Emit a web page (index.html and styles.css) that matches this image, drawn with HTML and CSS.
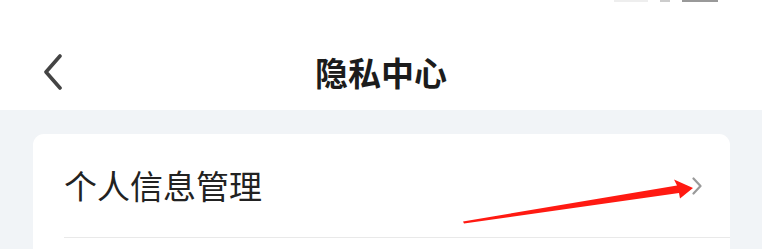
FILE: index.html
```html
<!DOCTYPE html>
<html>

<head>
    <title>隐私中心</title>
    <meta name="viewport" content="width=device-width,initial-scale=1">
    <link rel="stylesheet" href="styles.css">
</head>

<body>
    <div class="status">
        <span class="time">15:56</span>
        <span class="icons">
            <span class="signal"></span>
            <span class="wifi"></span>
            <span class="battery"></span>
        </span>
    </div>

    <header class="nav">
        <button class="back" aria-label="返回">
            <svg viewBox="0 0 20 36" width="20" height="36">
                <polyline points="17,2 3,18 17,34" fill="none" stroke="#444" stroke-width="3.6"
                    stroke-linecap="round" stroke-linejoin="round" />
            </svg>
        </button>
        <h1 class="title">隐私中心</h1>
        <span class="nav-spacer"></span>
    </header>

    <main class="content">
        <div class="card">
            <div class="row">
                <span class="row-label">个人信息管理</span>
                <svg class="chevron" viewBox="0 0 10 18" width="10" height="18">
                    <polyline points="1.5,1.5 8.5,9 1.5,16.5" fill="none" stroke="#9a9a9a" stroke-width="2.2"
                        stroke-linecap="round" stroke-linejoin="round" />
                </svg>
            </div>
            <div class="row row-empty"></div>
        </div>
    </main>

    <!-- red annotation arrow drawn on top of the screenshot -->
    <svg class="annotation" viewBox="0 0 762 249" width="762" height="249">
        <polygon points="463,221.5 677,185.5 674,179.5 693,188 680,198.5 679,193 464,223.5" fill="#ff1a12" />
    </svg>
</body>

</html>
```

FILE: styles.css
```css
body {
    margin: 0;
    font-family: "Noto Sans CJK SC", "Noto Sans", sans-serif;
    background-color: #f1f4f7;
    width: 762px;
    height: 249px;
    overflow: hidden;
    position: relative;
}

/* Only the bottom edge of the status bar is visible */
.status {
    height: 34px;
    background-color: #fff;
    display: flex;
    justify-content: space-between;
    padding: 0 44px 0 48px;
    overflow: hidden;
}

.status .time {
    font-size: 30px;
    font-weight: 600;
    color: #222;
    margin-top: -28px;
    line-height: 30px;
    height: 30px;
}

.status .icons {
    display: flex;
    gap: 12px;
    align-items: flex-start;
}

.signal,
.wifi {
    width: 34px;
    height: 2px;
    background-color: #eee;
}

.wifi {
    width: 10px;
    background-color: #ccc;
}

.battery {
    width: 36px;
    height: 2px;
    background-color: #999;
}

.nav {
    height: 76px;
    background-color: #fff;
    display: grid;
    grid-template-columns: 1fr auto 1fr;
    align-items: center;
}

.back {
    justify-self: start;
    margin-left: 43px;
    padding: 0;
    border: 0;
    background: none;
    display: flex;
}

.title {
    margin: 0;
    font-size: 33px;
    font-weight: 700;
    color: #1c1c1c;
    line-height: 1;
}

.content {
    padding: 24px 32px 0 33px;
}

.card {
    background-color: #fff;
    border-radius: 11px;
}

.row {
    height: 104px;
    margin-left: 31px;
    padding-right: 28px;
    display: flex;
    align-items: center;
    justify-content: space-between;
    border-bottom: 1px solid #e9e9e9;
    box-sizing: border-box;
}

.row-empty {
    border-bottom: 0;
}

.row-label {
    font-size: 33px;
    color: #222;
    line-height: 1;
}

.chevron {
    display: block;
}

.annotation {
    position: absolute;
    left: 0;
    top: 0;
    pointer-events: none;
}
```
